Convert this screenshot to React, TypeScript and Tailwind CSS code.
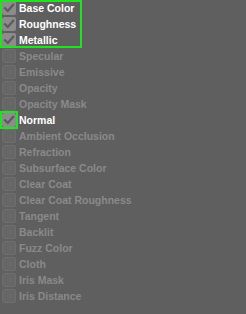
import React from "react";

const items: { label: string; checked: boolean }[] = [
  { label: "Base Color", checked: true },
  { label: "Roughness", checked: true },
  { label: "Metallic", checked: true },
  { label: "Specular", checked: false },
  { label: "Emissive", checked: false },
  { label: "Opacity", checked: false },
  { label: "Opacity Mask", checked: false },
  { label: "Normal", checked: true },
  { label: "Ambient Occlusion", checked: false },
  { label: "Refraction", checked: false },
  { label: "Subsurface Color", checked: false },
  { label: "Clear Coat", checked: false },
  { label: "Clear Coat Roughness", checked: false },
  { label: "Tangent", checked: false },
  { label: "Backlit", checked: false },
  { label: "Fuzz Color", checked: false },
  { label: "Cloth", checked: false },
  { label: "Iris Mask", checked: false },
  { label: "Iris Distance", checked: false },
];

function Box({ checked }: { checked: boolean }) {
  return checked ? (
    <div className="w-[14px] h-[14px] rounded-[2px] bg-[#8c8c8c] flex items-center justify-center">
      <svg width="12" height="12" viewBox="0 0 12 12">
        <path d="M2 6.2 L4.8 9 L10.2 2.8" fill="none" stroke="#5a5a5a" strokeWidth="2.2" strokeLinecap="square" />
      </svg>
    </div>
  ) : (
    <div className="w-[14px] h-[14px] rounded-[2px] bg-[#676767] border border-[#6e6e6e]" />
  );
}

export default function App() {
  return (
    <div
      className="relative w-[246px] h-[314px] bg-[#5f5f5f] overflow-hidden"
      style={{ fontFamily: '"Liberation Sans", Arial, sans-serif' }}
    >
      <div className="flex flex-col">
        {items.map((it) => (
          <div key={it.label} className="h-[16px] flex items-center pl-[2px] gap-[3px]">
            <Box checked={it.checked} />
            <span
              className={
                "text-[10.5px] font-bold leading-none " +
                (it.checked ? "text-white" : "text-[#8a8a8a]")
              }
            >
              {it.label}
            </span>
          </div>
        ))}
      </div>
      <div className="absolute left-0 top-0 w-[82px] h-[48px] border-2 border-[#22e022]" />
      <div className="absolute left-0 top-[111px] w-[18px] h-[18px] border-2 border-[#22e022]" />
    </div>
  );
}
